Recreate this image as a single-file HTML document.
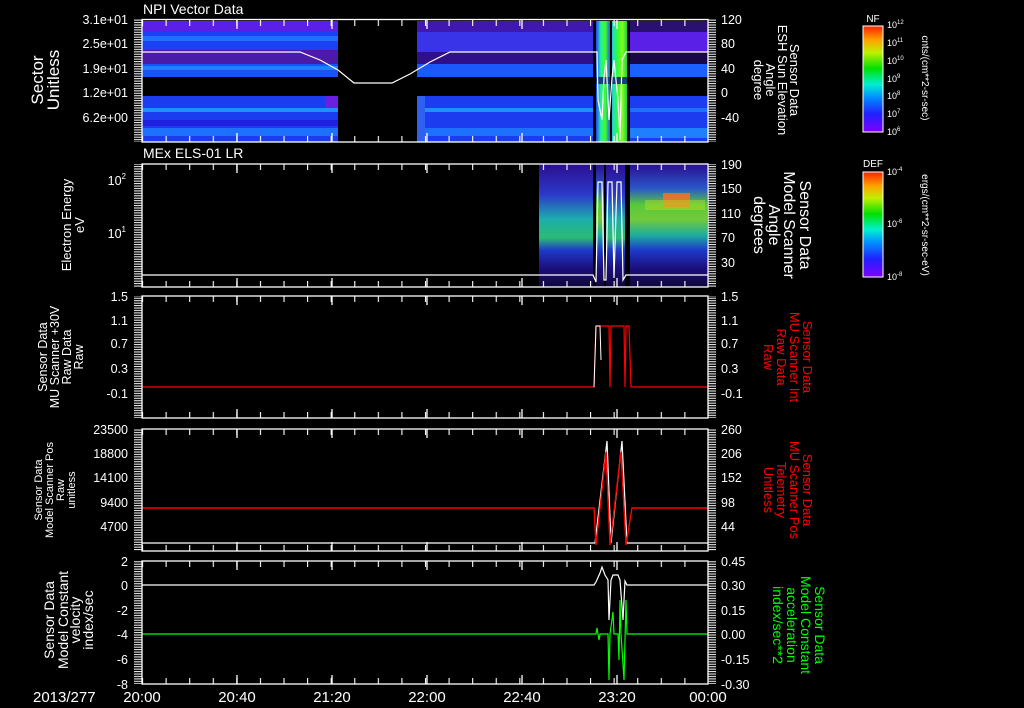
<!DOCTYPE html>
<html><head><meta charset="utf-8"><style>
html,body{margin:0;padding:0;background:#000;width:1024px;height:708px;overflow:hidden}
svg{display:block}
text{font-family:"Liberation Sans",sans-serif;fill:#fff}
.r text{fill:#f00}
.gr text{fill:#0f0}
</style></head><body>
<svg width="1024" height="708" viewBox="0 0 1024 708" xmlns="http://www.w3.org/2000/svg">
<defs>
<pattern id="topt" x="142" y="0" width="23.58" height="708" patternUnits="userSpaceOnUse"><line x1="0.5" y1="0" x2="0.5" y2="708" stroke="#fff" stroke-width="1.2"/></pattern>
<pattern id="comb" x="0" y="0" width="10" height="2.44" patternUnits="userSpaceOnUse"><line x1="0" y1="0.6" x2="10" y2="0.6" stroke="#fff" stroke-width="1"/></pattern>
<linearGradient id="nf" x1="0" y1="1" x2="0" y2="0">
<stop offset="0" stop-color="#8000ff"/><stop offset="0.17" stop-color="#2020ff"/><stop offset="0.33" stop-color="#0090ff"/><stop offset="0.45" stop-color="#00f0d0"/><stop offset="0.6" stop-color="#00e000"/><stop offset="0.75" stop-color="#c0f000"/><stop offset="0.87" stop-color="#ffa000"/><stop offset="1" stop-color="#ff2000"/></linearGradient>
<linearGradient id="p2a" x1="0" y1="0" x2="0" y2="1">
<stop offset="0" stop-color="#3010a0"/><stop offset="0.25" stop-color="#3040e0"/><stop offset="0.45" stop-color="#20c0c0"/><stop offset="0.6" stop-color="#30d080"/><stop offset="0.7" stop-color="#2040e0"/><stop offset="0.85" stop-color="#20108a"/><stop offset="1" stop-color="#100840"/></linearGradient>
<linearGradient id="p2b" x1="0" y1="0" x2="0" y2="1">
<stop offset="0" stop-color="#3010a0"/><stop offset="0.2" stop-color="#3060e0"/><stop offset="0.33" stop-color="#60e040"/><stop offset="0.45" stop-color="#80e040"/><stop offset="0.58" stop-color="#20c0b0"/><stop offset="0.7" stop-color="#2040e0"/><stop offset="0.85" stop-color="#20108a"/><stop offset="1" stop-color="#100840"/></linearGradient>
<linearGradient id="stripe" x1="0" y1="0" x2="1" y2="0">
<stop offset="0" stop-color="#2040ff"/><stop offset="0.15" stop-color="#20f0a0"/><stop offset="0.3" stop-color="#40ff20"/><stop offset="0.45" stop-color="#2060ff"/><stop offset="0.55" stop-color="#20e0c0"/><stop offset="0.7" stop-color="#30ff30"/><stop offset="0.85" stop-color="#80ff20"/><stop offset="1" stop-color="#20d040"/></linearGradient>
</defs>

<text x="143" y="14" font-size="14">NPI Vector Data</text>
<text x="143" y="158" font-size="14">MEx ELS-01 LR</text>

<!-- PANEL 1 data -->
<g>
<rect x="142" y="21" width="196" height="11" fill="#5a20e8"/>
<rect x="142" y="32" width="196" height="18" fill="#1c40f4"/>
<rect x="142" y="36" width="196" height="5" fill="#1e70ff"/>
<rect x="142" y="50" width="196" height="14" fill="#4a1aa8"/>
<rect x="142" y="64" width="196" height="13" fill="#1c50f8"/>
<rect x="142" y="66" width="196" height="4" fill="#1c80ff"/>
<rect x="142" y="96" width="196" height="46" fill="#1c3cf0"/>
<rect x="142" y="108" width="196" height="4" fill="#2090ff"/>
<rect x="142" y="120" width="196" height="6" fill="#2020e0"/>
<rect x="142" y="128" width="196" height="8" fill="#1e70ff"/>
<rect x="325" y="96" width="13" height="12" fill="#6a20e0"/>
<rect x="417" y="21" width="176" height="11" fill="#4018b0"/>
<rect x="417" y="32" width="176" height="20" fill="#3a34e8"/>
<rect x="417" y="52" width="176" height="12" fill="#30108a"/>
<rect x="417" y="64" width="176" height="13" fill="#1c58fa"/>
<rect x="417" y="96" width="176" height="46" fill="#1c3cf0"/>
<rect x="417" y="108" width="176" height="4" fill="#2090ff"/>
<rect x="417" y="128" width="176" height="8" fill="#1e70ff"/>
<rect x="417" y="96" width="8" height="46" fill="#3060f0"/>
<rect x="630" y="21" width="78" height="11" fill="#2a1070"/>
<rect x="630" y="32" width="78" height="20" fill="#5a20e8"/>
<rect x="630" y="52" width="78" height="12" fill="#180848"/>
<rect x="630" y="64" width="78" height="13" fill="#1c60ff"/>
<rect x="630" y="96" width="78" height="46" fill="#1c3cf0"/>
<rect x="630" y="108" width="78" height="4" fill="#1e70ff"/>
<rect x="630" y="128" width="78" height="10" fill="#1e80ff"/>
<rect x="596" y="21" width="31" height="56" fill="url(#stripe)"/>
<rect x="596" y="84" width="31" height="58" fill="url(#stripe)"/>
<rect x="596" y="77" width="31" height="7" fill="#104080"/>
<rect x="610" y="21" width="2" height="121" fill="#000"/>
<polyline points="142,52 300,52 320,60 338,70 354,83 392,83 410,74 430,62 450,52 593,52 597,52 598,100 602,120 604,78 606,60 609,120 612,78 614,60 618,100 620,140 622,60 626,52 708,52" fill="none" stroke="#fff" stroke-width="1.2"/>
</g>

<!-- PANEL 2 data -->
<g>
<rect x="539" y="164" width="54" height="123" fill="url(#p2a)" opacity="0.9"/>
<rect x="596" y="164" width="8" height="123" fill="url(#p2b)" opacity="0.9"/>
<rect x="606" y="164" width="19" height="123" fill="url(#p2a)" opacity="0.9"/>
<rect x="630" y="164" width="77" height="123" fill="url(#p2b)" opacity="0.9"/>
<rect x="663" y="193" width="27" height="14" fill="#ff7020" opacity="0.8"/>
<rect x="645" y="200" width="60" height="10" fill="#c0e020" opacity="0.4"/>
<polyline points="142,275 593,275 596,282 598,182 602,182 604,280 606,280 608,182 612,182 614,278 617,182 621,182 623,280 626,275 708,275" fill="none" stroke="#fff" stroke-width="1.2"/>
</g>

<!-- PANEL 3 -->
<polyline points="142,387 594,387 596,326 609,326 610,387 611,326 624,326 625,387 626,326 629,326 631,387 708,387" fill="none" stroke="#f00" stroke-width="1.2"/>
<polyline points="594,387 596,326 600,326 601,360" fill="none" stroke="#fff" stroke-width="1"/>

<!-- PANEL 4 -->
<polyline points="142,543 595,543 607,441 611,543 622,441 627,543 708,543" fill="none" stroke="#fff" stroke-width="1.2"/>
<polyline points="142,508 594,508 596,545 606,452 610,545 621,452 626,545 632,508 708,508" fill="none" stroke="#f00" stroke-width="1.4"/>

<!-- PANEL 5 -->
<polyline points="142,634 596,634 597,628 599,640 600,634 608,634 609,680 610,634 613,612 614,634 618,634 619,660 620,600 621,634 624,680 626,600 627,634 708,634" fill="none" stroke="#0f0" stroke-width="1.2"/>
<polyline points="142,585 594,585 596,582 600,573 602,567 605,575 608,580 609,620 611,580 613,575 618,575 620,580 623,620 625,581 627,585 708,585" fill="none" stroke="#fff" stroke-width="1.2"/>

<g fill="none" stroke="#fff" stroke-width="1.3">
<rect x="142" y="19.5" width="566" height="122.5"/>
<rect x="142" y="164" width="566" height="123"/>
<rect x="142" y="296" width="566" height="122"/>
<rect x="142" y="429" width="566" height="122"/>
<rect x="142" y="561" width="566" height="123"/>
</g>
<g fill="url(#topt)">
<rect x="142" y="20" width="566" height="6"/><rect x="142" y="136" width="566" height="6"/>
<rect x="142" y="164" width="566" height="6"/><rect x="142" y="281" width="566" height="6"/>
<rect x="142" y="296" width="566" height="6"/><rect x="142" y="412" width="566" height="6"/>
<rect x="142" y="429" width="566" height="6"/><rect x="142" y="545" width="566" height="6"/>
<rect x="142" y="561" width="566" height="6"/><rect x="142" y="678" width="566" height="6"/>
</g>
<g stroke="#fff" stroke-width="1.3">
<path d="M237 20v9M332 20v9M427 20v9M522 20v9M617 20v9M237 142v-9M332 142v-9M427 142v-9M522 142v-9M617 142v-9"/>
<path d="M237 164v9M332 164v9M427 164v9M522 164v9M617 164v9M237 287v-9M332 287v-9M427 287v-9M522 287v-9M617 287v-9"/>
<path d="M237 296v9M332 296v9M427 296v9M522 296v9M617 296v9M237 418v-9M332 418v-9M427 418v-9M522 418v-9M617 418v-9"/>
<path d="M237 429v9M332 429v9M427 429v9M522 429v9M617 429v9M237 551v-9M332 551v-9M427 551v-9M522 551v-9M617 551v-9"/>
<path d="M237 561v9M332 561v9M427 561v9M522 561v9M617 561v9M237 684v-9M332 684v-9M427 684v-9M522 684v-9M617 684v-9"/>
</g>
<g fill="url(#comb)">
<rect x="134" y="19" width="8" height="123"/><rect x="708" y="19" width="8" height="123"/>
<rect x="134" y="164" width="8" height="123"/><rect x="708" y="164" width="8" height="123"/>
<rect x="134" y="296" width="8" height="122"/><rect x="708" y="296" width="8" height="122"/>
<rect x="134" y="429" width="8" height="122"/><rect x="708" y="429" width="8" height="122"/>
<rect x="134" y="561" width="8" height="123"/><rect x="708" y="561" width="8" height="123"/>
</g>

<g font-size="12.5" text-anchor="end">
<text x="128" y="24">3.1e+01</text><text x="128" y="48">2.5e+01</text><text x="128" y="73">1.9e+01</text><text x="128" y="97">1.2e+01</text><text x="128" y="122">6.2e+00</text>
<text x="126" y="185">10<tspan font-size="8" dy="-6">2</tspan></text><text x="126" y="238">10<tspan font-size="8" dy="-6">1</tspan></text>
<text x="128" y="301">1.5</text><text x="128" y="325">1.1</text><text x="128" y="348">0.7</text><text x="128" y="373">0.3</text><text x="128" y="398">-0.1</text>
<text x="128" y="434">23500</text><text x="128" y="458">18800</text><text x="128" y="482">14100</text><text x="128" y="507">9400</text><text x="128" y="531">4700</text>
<text x="128" y="566">2</text><text x="128" y="590">0</text><text x="128" y="615">-2</text><text x="128" y="639">-4</text><text x="128" y="664">-6</text><text x="128" y="689">-8</text>
</g>
<g font-size="12.5">
<text x="721" y="24">120</text><text x="721" y="48">80</text><text x="721" y="73">40</text><text x="721" y="97">0</text><text x="721" y="122">-40</text>
<text x="721" y="169">190</text><text x="721" y="193">150</text><text x="721" y="218">110</text><text x="721" y="242">70</text><text x="721" y="267">30</text>
<text x="721" y="301">1.5</text><text x="721" y="325">1.1</text><text x="721" y="348">0.7</text><text x="721" y="373">0.3</text><text x="721" y="398">-0.1</text>
<text x="721" y="434">260</text><text x="721" y="458">206</text><text x="721" y="482">152</text><text x="721" y="507">98</text><text x="721" y="531">44</text>
<text x="721" y="566">0.45</text><text x="721" y="590">0.30</text><text x="721" y="615">0.15</text><text x="721" y="639">0.00</text><text x="721" y="664">-0.15</text><text x="721" y="689">-0.30</text>
</g>
<g font-size="15">
<text x="33" y="702">2013/277</text>
<text x="142" y="702" text-anchor="middle">20:00</text><text x="237" y="702" text-anchor="middle">20:40</text><text x="332" y="702" text-anchor="middle">21:20</text><text x="427" y="702" text-anchor="middle">22:00</text><text x="522" y="702" text-anchor="middle">22:40</text><text x="617" y="702" text-anchor="middle">23:20</text><text x="708" y="702" text-anchor="middle">00:00</text>
</g>

<g text-anchor="middle">
<g transform="translate(80,80) rotate(-90)" font-size="17"><text x="0" y="-37">Sector</text><text x="0" y="-21">Unitless</text></g>
<g transform="translate(80,225) rotate(-90)" font-size="13"><text x="0" y="-9">Electron Energy</text><text x="0" y="4">eV</text></g>
<g transform="translate(80,357) rotate(-90)" font-size="12.5"><text x="0" y="-33">Sensor Data</text><text x="0" y="-21">MU Scanner +30V</text><text x="0" y="-9">Raw Data</text><text x="0" y="3">Raw</text></g>
<g transform="translate(80,490) rotate(-90)" font-size="11"><text x="0" y="-38">Sensor Data</text><text x="0" y="-27">Model Scanner Pos</text><text x="0" y="-16">Raw</text><text x="0" y="-5">unitless</text></g>
<g transform="translate(80,620) rotate(-90)" font-size="14"><text x="0" y="-26">Sensor Data</text><text x="0" y="-12">Model Constant</text><text x="0" y="0">velocity</text><text x="0" y="13">index/sec</text></g>
</g>
<g text-anchor="middle">
<g transform="translate(780,80) rotate(90)" font-size="13"><text x="0" y="-10">Sensor Data</text><text x="0" y="2">ESH Sun Elevation</text><text x="0" y="14">Angle</text><text x="0" y="26">degree</text></g>
<g transform="translate(780,225) rotate(90)" font-size="16"><text x="0" y="-20">Sensor Data</text><text x="0" y="-4">Model Scanner</text><text x="0" y="11">Angle</text><text x="0" y="26">degrees</text></g>
<g class="r" transform="translate(788,357) rotate(90)" font-size="13"><text x="0" y="-15">Sensor Data</text><text x="0" y="-2">MU Scanner Int</text><text x="0" y="11">Raw Data</text><text x="0" y="24">Raw</text></g>
<g class="r" transform="translate(788,490) rotate(90)" font-size="13"><text x="0" y="-15">Sensor Data</text><text x="0" y="-2">MU Scanner Pos</text><text x="0" y="11">Telemetry</text><text x="0" y="24">Unitless</text></g>
<g class="gr" transform="translate(798,625) rotate(90)" font-size="14"><text x="0" y="-17">Sensor Data</text><text x="0" y="-3">Model Constant</text><text x="0" y="11">acceleration</text><text x="0" y="25">index/sec**2</text></g>
</g>

<text x="873" y="22" font-size="10" text-anchor="middle">NF</text>
<rect x="863" y="26" width="20" height="106" fill="url(#nf)" stroke="#fff" stroke-width="1"/>
<g font-size="9"><text x="887" y="28">10<tspan font-size="6" dy="-4">12</tspan></text><text x="887" y="46">10<tspan font-size="6" dy="-4">11</tspan></text><text x="887" y="64">10<tspan font-size="6" dy="-4">10</tspan></text><text x="887" y="82">10<tspan font-size="6" dy="-4">9</tspan></text><text x="887" y="99">10<tspan font-size="6" dy="-4">8</tspan></text><text x="887" y="117">10<tspan font-size="6" dy="-4">7</tspan></text><text x="887" y="135">10<tspan font-size="6" dy="-4">6</tspan></text></g>
<text transform="translate(922,78) rotate(90)" font-size="10" text-anchor="middle">cnts/(cm**2-sr-sec)</text>
<text x="873" y="167" font-size="10" text-anchor="middle">DEF</text>
<rect x="863" y="172" width="20" height="105" fill="url(#nf)" stroke="#fff" stroke-width="1"/>
<g font-size="9"><text x="887" y="175">10<tspan font-size="6" dy="-4">-4</tspan></text><text x="887" y="227">10<tspan font-size="6" dy="-4">-6</tspan></text><text x="887" y="280">10<tspan font-size="6" dy="-4">-8</tspan></text></g>
<text transform="translate(922,225) rotate(90)" font-size="10" text-anchor="middle">ergs/(cm**2-sr-sec-eV)</text>
</svg>
</body></html>
